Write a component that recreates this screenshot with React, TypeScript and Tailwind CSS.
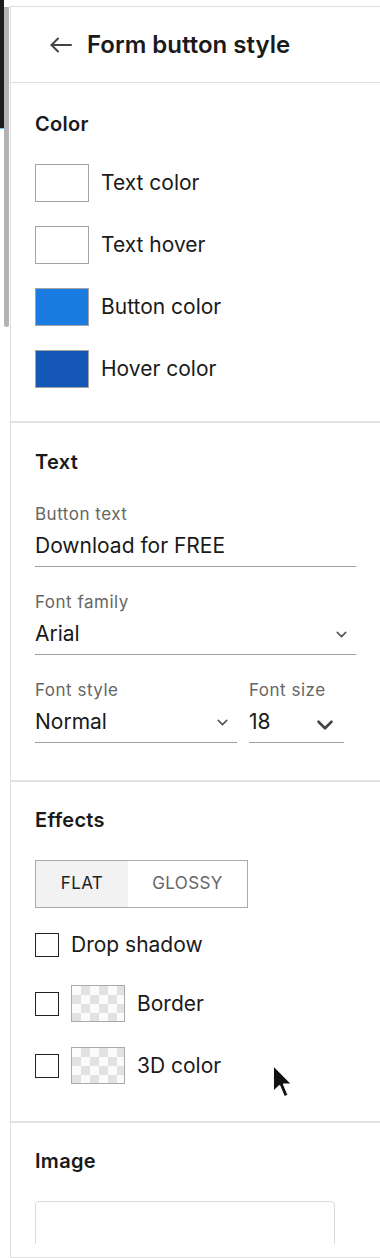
import { ChevronDown } from "lucide-react";

const swatches = [
  { label: "Text color", color: "bg-white" },
  { label: "Text hover", color: "bg-white" },
  { label: "Button color", color: "bg-[#1a7be0]" },
  { label: "Hover color", color: "bg-[#1557b6]" },
];

function Field({ label, value, chevron }: { label: string; value: string; chevron?: "sm" | "lg" }) {
  return (
    <div className="flex flex-col">
      <div className="text-[17px] leading-[20px] tracking-[0.5px] text-[#666]">{label}</div>
      <div className="mt-2 flex h-[35px] items-start justify-between border-b border-[#9e9e9e]">
        <span className="text-[21px] leading-[28px] text-[#1a1a1a]">{value}</span>
        {chevron === "sm" && <ChevronDown size={17} strokeWidth={2.2} className="mr-[6px] mt-[6px] text-[#555]" />}
        {chevron === "lg" && <ChevronDown size={26} strokeWidth={2.4} className="mr-[6px] mt-[4px] text-[#444]" />}
      </div>
    </div>
  );
}

function Checker() {
  return (
    <div className="h-[37px] w-[54px] border border-[#aaa] bg-[repeating-conic-gradient(#e2e2e2_0%_25%,#fbfbfb_0%_50%)] bg-[length:18px_18px]" />
  );
}

function Checkbox() {
  return <div className="h-6 w-6 border-[1.5px] border-[#222] bg-white" />;
}

export default function App() {
  return (
    <div className="relative flex h-[1258px] w-[380px] overflow-hidden bg-white font-['Inter',sans-serif] text-[#1a1a1a]">
      {/* left gutter */}
      <div className="flex w-[10px] shrink-0">
        <div className="flex w-[4px] flex-col">
          <div className="h-[128px] bg-[#1c1c1c]" />
          <div className="h-px bg-[#5fd3e6]" />
        </div>
        <div className="mt-[7px] h-[320px] w-[5px] rounded-b-full bg-[#b3b3b3]" />
      </div>

      {/* panel */}
      <div className="mt-[6px] flex min-w-0 flex-1 flex-col border-b border-l border-t border-[#dedede]">
        {/* header */}
        <div className="flex h-[76px] shrink-0 items-center border-b border-[#dedede] pl-[39px]">
          <svg width="22" height="16" viewBox="0 0 22 16" fill="none" stroke="#444" strokeWidth="2" strokeLinecap="round" strokeLinejoin="round">
            <path d="M21 8H1.5" />
            <path d="M8 1.5L1.5 8L8 14.5" />
          </svg>
          <h1 className="ml-[15px] text-[24px] font-semibold leading-[30px]">Form button style</h1>
        </div>

        <div className="min-h-0 flex-1 overflow-hidden">
          {/* Color */}
          <section className="px-6 pb-[33px] pt-[28px]">
            <h2 className="text-[20px] font-semibold leading-[26px] tracking-[0.3px]">Color</h2>
            <div className="mt-[27px] flex flex-col gap-6">
              {swatches.map((s) => (
                <div key={s.label} className="flex items-center">
                  <div className={`h-[38px] w-[54px] border border-[#a3a3a3] ${s.color}`} />
                  <span className="ml-[12px] text-[21px] leading-[26px]">{s.label}</span>
                </div>
              ))}
            </div>
          </section>

          {/* Text */}
          <section className="border-t-2 border-[#e2e2e2] px-6 pb-[37px] pt-[27px]">
            <h2 className="text-[20px] font-semibold leading-[24px] tracking-[0.3px]">Text</h2>
            <div className="mt-[30px] flex flex-col gap-[25px]">
              <Field label="Button text" value="Download for FREE" />
              <Field label="Font family" value="Arial" chevron="sm" />
              <div className="flex gap-3 pr-[12px]">
                <div className="w-[202px]">
                  <Field label="Font style" value="Normal" chevron="sm" />
                </div>
                <div className="flex-1">
                  <Field label="Font size" value="18" chevron="lg" />
                </div>
              </div>
            </div>
          </section>

          {/* Effects */}
          <section className="border-t-2 border-[#e2e2e2] px-6 pb-[37px] pt-[26px]">
            <h2 className="text-[20px] font-semibold leading-[24px] tracking-[0.3px]">Effects</h2>
            <div className="mt-[28px] flex h-[48px] w-[213px] border border-[#aaa] text-[17px] tracking-[0.4px]">
              <div className="flex w-[92px] items-center justify-center bg-[#f2f2f2] text-[#222]">FLAT</div>
              <div className="flex flex-1 items-center justify-center text-[#666]">GLOSSY</div>
            </div>
            <div className="mt-[25px] flex h-6 items-center">
              <Checkbox />
              <span className="ml-[12px] text-[21px] leading-[26px]">Drop shadow</span>
            </div>
            <div className="mt-[28px] flex items-center">
              <Checkbox />
              <div className="ml-[12px]">
                <Checker />
              </div>
              <span className="ml-[12px] text-[21px] leading-[26px]">Border</span>
            </div>
            <div className="mt-[25px] flex items-center">
              <Checkbox />
              <div className="ml-[12px]">
                <Checker />
              </div>
              <span className="ml-[12px] text-[21px] leading-[26px]">3D color</span>
            </div>
          </section>

          {/* Image */}
          <section className="border-t-2 border-[#e2e2e2] px-6 pt-[26px]">
            <h2 className="text-[20px] font-semibold leading-[24px] tracking-[0.3px]">Image</h2>
            <div className="mt-[28px] h-[200px] w-[300px] rounded-[4px] border border-[#dcdcdc]" />
          </section>
        </div>
        <div className="h-[13px] shrink-0" />
      </div>

      {/* mouse pointer */}
      <svg className="absolute left-[272px] top-[1064px]" width="22" height="36" viewBox="0 0 19 31" fill="#111" stroke="#fff" strokeWidth="1.4" strokeLinejoin="round">
        <path d="M1 1V24L6.5 18.8L10.6 28.5L14.2 27L10.2 17.5H17.5Z" />
      </svg>
    </div>
  );
}
